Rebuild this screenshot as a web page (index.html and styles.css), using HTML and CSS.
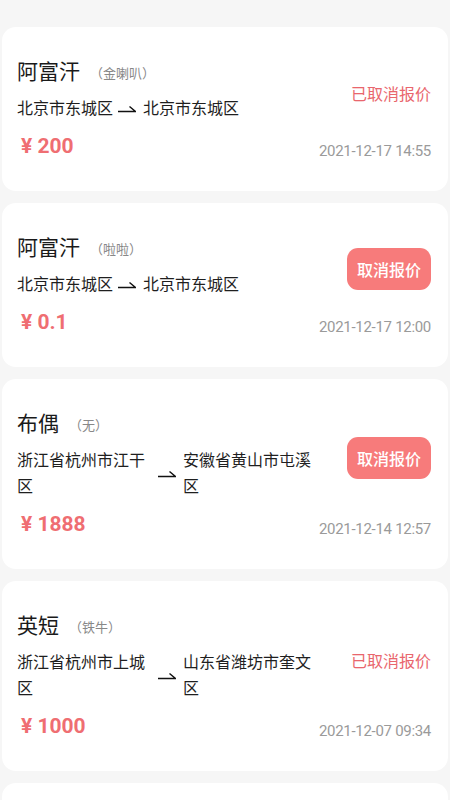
FILE: index.html
```html
<!DOCTYPE html>
<html lang="zh-CN">
<head>
<meta charset="utf-8">
<title>报价列表</title>
<link rel="stylesheet" href="styles.css">
</head>
<body>
<div class="list">
  <div class="card">
    <div class="top">
      <div class="info">
        <div class="title"><span class="name">阿富汗</span><span class="sub">（金喇叭）</span></div>
        <div class="route">
          <span class="place">北京市东城区</span>
          <svg class="arrow" width="18" height="10" viewBox="0 0 18 10"><path d="M0 7.5H17.5L11.5 2.5" fill="none" stroke="#111" stroke-width="1.5"/></svg>
          <span class="place">北京市东城区</span>
        </div>
      </div>
      <div class="side"><span class="status">已取消报价</span></div>
    </div>
    <div class="bottom"><span class="price">¥ 200</span><span class="date">2021-12-17 14:55</span></div>
  </div>

  <div class="card">
    <div class="top">
      <div class="info">
        <div class="title"><span class="name">阿富汗</span><span class="sub">（啦啦）</span></div>
        <div class="route">
          <span class="place">北京市东城区</span>
          <svg class="arrow" width="18" height="10" viewBox="0 0 18 10"><path d="M0 7.5H17.5L11.5 2.5" fill="none" stroke="#111" stroke-width="1.5"/></svg>
          <span class="place">北京市东城区</span>
        </div>
      </div>
      <div class="side"><span class="btn">取消报价</span></div>
    </div>
    <div class="bottom"><span class="price">¥ 0.1</span><span class="date">2021-12-17 12:00</span></div>
  </div>

  <div class="card">
    <div class="top">
      <div class="info">
        <div class="title"><span class="name">布偶</span><span class="sub">（无）</span></div>
        <div class="route">
          <span class="place">浙江省杭州市江干区</span>
          <svg class="arrow" width="18" height="10" viewBox="0 0 18 10"><path d="M0 7.5H17.5L11.5 2.5" fill="none" stroke="#111" stroke-width="1.5"/></svg>
          <span class="place">安徽省黄山市屯溪区</span>
        </div>
      </div>
      <div class="side"><span class="btn">取消报价</span></div>
    </div>
    <div class="bottom"><span class="price">¥ 1888</span><span class="date">2021-12-14 12:57</span></div>
  </div>

  <div class="card">
    <div class="top">
      <div class="info">
        <div class="title"><span class="name">英短</span><span class="sub">（铁牛）</span></div>
        <div class="route">
          <span class="place">浙江省杭州市上城区</span>
          <svg class="arrow" width="18" height="10" viewBox="0 0 18 10"><path d="M0 7.5H17.5L11.5 2.5" fill="none" stroke="#111" stroke-width="1.5"/></svg>
          <span class="place">山东省潍坊市奎文区</span>
        </div>
      </div>
      <div class="side"><span class="status">已取消报价</span></div>
    </div>
    <div class="bottom"><span class="price">¥ 1000</span><span class="date">2021-12-07 09:34</span></div>
  </div>

  <div class="card card-next"></div>
</div>
</body>
</html>
```

FILE: styles.css
```css
* { box-sizing: border-box; }
html, body { margin: 0; padding: 0; }
body {
  background: #f6f6f6;
  font-family: Roboto, "Noto Sans CJK SC", sans-serif;
  color: #1f1f1f;
  width: 450px;
  height: 800px;
  overflow: hidden;
}
.list {
  display: flex;
  flex-direction: column;
  gap: 12px;
  padding: 27px 2px 0 2px;
}
.card {
  background: #fff;
  border-radius: 14px;
  padding: 30px 17px 30px 15px;
}
.card-next {
  height: 60px;
  flex: none;
}
.top {
  display: flex;
  align-items: center;
  justify-content: space-between;
}
.info {
  display: flex;
  flex-direction: column;
}
.title {
  display: flex;
  align-items: center;
  height: 30px;
}
.name {
  font-size: 21px;
  line-height: 30px;
  font-weight: 400;
  color: #1a1a1a;
}
.sub {
  font-size: 13px;
  color: #888;
  margin-left: 10px;
}
.route {
  display: flex;
  align-items: center;
  margin-top: 9px;
}
.place {
  font-size: 16px;
  line-height: 26px;
  max-width: 136px;
  color: #1f1f1f;
}
.arrow {
  flex: none;
  margin: 0 7px 0 5px;
}
.side {
  margin-top: 6px;
}
.status {
  font-size: 16px;
  color: #e9666d;
}
.btn {
  display: inline-flex;
  align-items: center;
  justify-content: center;
  height: 42px;
  padding: 0 10px;
  border-radius: 11px;
  background: #f77b7b;
  color: #fff;
  font-size: 16px;
  font-weight: 500;
}
.bottom {
  display: flex;
  align-items: flex-end;
  justify-content: space-between;
  margin-top: 9px;
}
.price {
  font-size: 21px;
  line-height: 30px;
  font-weight: 700;
  color: #ef6e72;
  padding-left: 4px;
}
.date {
  font-size: 15px;
  line-height: 20px;
  letter-spacing: -0.3px;
  color: #9a9a9a;
}
```
